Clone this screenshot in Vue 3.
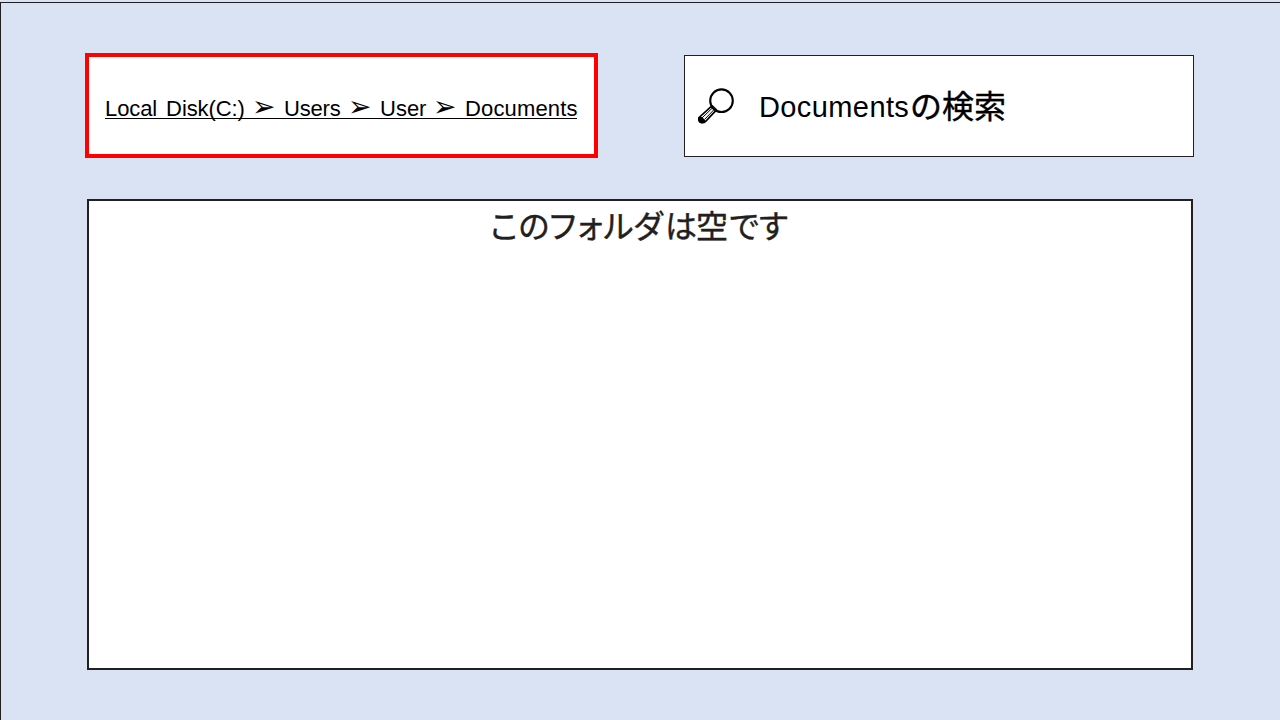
<script setup>
const crumbs = [
  { name: 'Local Disk(C:)', cls: 'disk' },
  { name: 'Users', cls: 'users' },
  { name: 'User', cls: 'user' },
  { name: 'Documents', cls: 'docs' },
]
</script>

<template>
  <main class="window">
    <header class="toolbar">
      <nav class="path">
        <div class="crumbs">
          <template v-for="(c, i) in crumbs" :key="c.name">
            <span v-if="i" class="arrow">➢</span>
            <span :class="c.cls">{{ c.name }}</span>
          </template>
        </div>
      </nav>
      <div class="search">
        <svg class="glass" width="38" height="38" viewBox="0 0 38 38" fill="none" stroke="#000">
          <circle cx="24.5" cy="13.7" r="11.3" stroke-width="2.1" />
          <path d="M14.6 19.2L2.4 30.2Q.8 33 3.2 35Q6 36.6 8.4 34.6L18.8 23.6" stroke-width="1.7" />
          <path d="M16.2 20.2L5.2 30.8M17.6 22L7.4 32.6" stroke-width="1" />
          <path d="M1.6 30L5.2 30L8.6 33.9Q5.6 37.6 2.4 35.4Q.1 33 1.6 30Z" fill="#000" stroke="none" />
          <path d="M14.8 18.2L20 23.2" stroke-width="1.3" />
        </svg>
        <span class="latin">Documents</span><span class="jp">の検索</span>
      </div>
    </header>
    <section class="folder">
      <p class="empty">こ<span class="k3">の</span><span class="k5">フ</span><span class="k4">ォ</span><span class="k1">ル</span><span class="k0">ダ</span><span class="k1">は</span><span class="k0">空</span><span class="k3">で</span>す</p>
    </section>
  </main>
</template>

<style>
body { background: #dae3f3; overflow: hidden; }
</style>

<style scoped>
.window {
  box-sizing: border-box;
  width: 1280px;
  height: 718px;
  margin-top: 2px;
  padding: 50px 86px 0 84px;
  border: solid #231f20;
  border-width: 1px 0 0 1px;
  background: #dae3f3;
  color: #000;
  font-family: "Liberation Sans", "Noto Sans CJK JP", sans-serif;
}
.toolbar { display: flex; justify-content: space-between; align-items: flex-start; height: 146px; }
.path, .search, .folder { box-sizing: border-box; background: #fff; }
.path { width: 513px; height: 105px; border: 4px solid #f00; padding: 39px 0 0 16px; }
.crumbs {
  display: grid;
  grid-template-columns: 148px 31px 65px 31px 54px 31px 112px;
  width: 472px;
  height: 22px;
  border-bottom: 1px solid #000;
  font-size: 22px;
  line-height: 25px;
  white-space: nowrap;
}
.disk { letter-spacing: -.1px; word-spacing: 3px; }
.users { letter-spacing: -.2px; }
.docs { letter-spacing: .15px; }
.arrow { margin-left: -1px; font-family: "DejaVu Sans", sans-serif; font-size: 28px; line-height: 21px; }
.search { display: flex; width: 510px; height: 102px; margin: 2px 0 0; border: 1px solid #231f20; padding: 31px 0 0 12px; white-space: nowrap; }
.glass { flex: none; margin-right: 24px; }
.latin { width: 151px; font-size: 29px; line-height: 40px; letter-spacing: .4px; }
.jp { font-family: "Noto Sans CJK JP", sans-serif; font-size: 32px; line-height: 34px; -webkit-text-stroke: .4px #000; }
.folder { width: 1106px; height: 471px; margin-left: 2px; border: 2px solid #231f20; padding-top: 1px; }
.empty {
  margin: 0;
  padding-left: 399px;
  font: 32px/44px "Noto Sans CJK JP", sans-serif;
  letter-spacing: -2px;
  color: #231f20;
  -webkit-text-stroke: .4px #231f20;
}
.k0 { letter-spacing: 0; }
.k1 { letter-spacing: -1px; }
.k3 { letter-spacing: -3px; }
.k4 { letter-spacing: -4px; }
.k5 { letter-spacing: -5px; }
</style>
